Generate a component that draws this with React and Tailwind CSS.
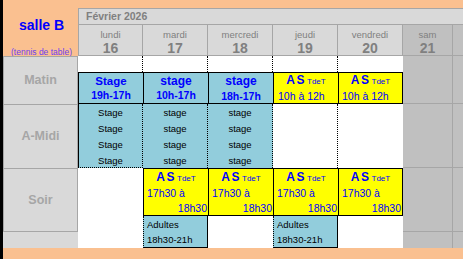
import React from "react";

const headerDays = [
  { name: "lundi", num: "16", col: "col-start-3 border-l", bg: "bg-[#d9d9d9]" },
  { name: "mardi", num: "17", col: "col-start-4", bg: "bg-[#d9d9d9]" },
  { name: "mercredi", num: "18", col: "col-start-5", bg: "bg-[#d9d9d9]" },
  { name: "jeudi", num: "19", col: "col-start-6", bg: "bg-[#d9d9d9]" },
  { name: "vendredi", num: "20", col: "col-start-7", bg: "bg-[#d9d9d9]" },
  { name: "sam", num: "21", col: "col-start-8", bg: "bg-[#c0c0c0]" },
];

const AsTitle = () => (
  <div className="flex items-baseline justify-center text-[#0000ff]">
    <span className="text-[12px] font-bold tracking-[1.5px]">AS</span>
    <span className="ml-[1px] text-[8px]">TdeT</span>
  </div>
);

const SoirAs = ({ col, last }) => (
  <div
    className={`${col} row-start-7 flex flex-col border-y border-l border-black bg-[#ffff00] pt-[1px] leading-[15px] ${
      last ? "border-r" : ""
    }`}
  >
    <AsTitle />
    <div className="pl-[3px] text-[10.5px] text-[#0000ff]">17h30 à</div>
    <div className="pr-[1px] text-right text-[10.5px] text-[#0000ff]">18h30</div>
  </div>
);

const Adultes = ({ col }) => (
  <div
    className={`${col} row-start-8 row-span-2 border-l border-r border-b border-black [border-left-style:dotted] bg-[#92cddc] pl-[3px] pt-[1px] text-[9.5px] leading-[15px] text-black`}
  >
    <div>Adultes</div>
    <div>18h30-21h</div>
  </div>
);

const StageList = ({ col, word, extra }) => (
  <div
    className={`${col} row-start-6 flex flex-col items-center bg-[#92cddc] pt-[1px] text-[9.5px] leading-4 text-black ${extra}`}
  >
    <div>{word}</div>
    <div>{word}</div>
    <div>{word}</div>
    <div>{word}</div>
  </div>
);

export default function App() {
  return (
    <div className="grid h-[259px] w-[463px] grid-cols-[3px_75px_65px_65px_65px_65px_65px_50px_10px] grid-rows-[8px_16px_32px_16px_32px_64px_48px_16px_16px_11px] overflow-hidden bg-[#fac090] font-['Liberation_Sans',Arial,sans-serif]">
      {/* left black strip */}
      <div className="col-start-1 row-start-1 row-span-10 bg-black" />

      {/* title */}
      <div className="col-start-2 row-start-1 row-span-3 flex flex-col items-center pl-[2px] pt-[17px]">
        <div className="text-[14px] font-bold leading-4 text-[#0000ff]">salle B</div>
        <div className="mt-[14px] text-[8.5px] leading-[10px] text-[#6a3ff0]">(tennis de table)</div>
      </div>

      {/* month */}
      <div className="col-start-3 col-span-7 row-start-2 border-l border-t border-[#a6a6a6] bg-[#d9d9d9] pl-[7px] text-[10.5px] font-bold leading-[15px] text-[#808080]">
        Février 2026
      </div>

      {/* day headers */}
      {headerDays.map((d) => (
        <div
          key={d.name}
          className={`${d.col} ${d.bg} row-start-3 flex flex-col items-center border-y border-r border-[#a6a6a6] pt-[4px] text-[#808080]`}
        >
          <div className="text-[9.5px] leading-[12px]">{d.name}</div>
          <div className="text-[14px] font-bold leading-[14px]">{d.num}</div>
        </div>
      ))}
      <div className="col-start-9 row-start-3 border-y border-[#a6a6a6] bg-[#c0c0c0]" />

      {/* row labels */}
      <div className="col-start-2 row-start-4 row-span-2 flex items-center justify-center border-x border-t border-[#a6a6a6] bg-[#d9d9d9] text-[12.5px] font-bold text-[#a6a6a6]">
        Matin
      </div>
      <div className="col-start-2 row-start-6 flex items-center justify-center border-x border-t border-[#a6a6a6] bg-[#d9d9d9] text-[12.5px] font-bold text-[#a6a6a6]">
        A-Midi
      </div>
      <div className="col-start-2 row-start-7 row-span-2 flex items-center justify-center border border-[#a6a6a6] bg-[#d9d9d9] text-[12.5px] font-bold text-[#a6a6a6]">
        Soir
      </div>
      <div className="col-start-2 row-start-9 bg-[#d9d9d9]" />

      {/* weekend columns */}
      <div className="col-start-8 row-start-4 row-span-2 border-b border-r border-[#a6a6a6] bg-[#c0c0c0]" />
      <div className="col-start-8 row-start-6 border-b border-r border-[#a6a6a6] bg-[#c0c0c0]" />
      <div className="col-start-8 row-start-7 row-span-2 border-b border-r border-[#a6a6a6] bg-[#c0c0c0]" />
      <div className="col-start-8 row-start-9 border-r border-[#a6a6a6] bg-[#c0c0c0]" />
      <div className="col-start-9 row-start-4 row-span-2 border-b border-[#a6a6a6] bg-[#c0c0c0]" />
      <div className="col-start-9 row-start-6 border-b border-[#a6a6a6] bg-[#c0c0c0]" />
      <div className="col-start-9 row-start-7 row-span-2 border-b border-[#a6a6a6] bg-[#c0c0c0]" />
      <div className="col-start-9 row-start-9 bg-[#c0c0c0]" />

      {/* blank row under the header */}
      <div className="col-start-3 row-start-4 border-r border-dotted border-black bg-white" />
      <div className="col-start-4 row-start-4 border-r border-dotted border-black bg-white" />
      <div className="col-start-5 row-start-4 border-r border-dotted border-black bg-white" />
      <div className="col-start-6 row-start-4 border-r border-dotted border-black bg-white" />
      <div className="col-start-7 row-start-4 bg-white" />

      {/* matin */}
      <div className="col-start-3 row-start-5 flex flex-col items-center border-y border-l border-black bg-[#92cddc] pt-[1px] leading-[14px] text-[#0000ff]">
        <div className="text-[11.5px] font-bold">Stage</div>
        <div className="text-[10.5px] font-bold">19h-17h</div>
      </div>
      <div className="col-start-4 row-start-5 flex flex-col items-center border-y border-l border-black bg-[#92cddc] pt-[1px] leading-[14px] text-[#0000ff]">
        <div className="text-[12px] font-bold">stage</div>
        <div className="text-[10.5px] font-bold">10h-17h</div>
      </div>
      <div className="col-start-5 row-start-5 flex flex-col items-center border-y border-l border-black bg-[#92cddc] pt-[1px] leading-[14px] text-[#0000ff]">
        <div className="text-[12px] font-bold">stage</div>
        <div className="relative top-[1px] text-[10.5px] font-bold">18h-17h</div>
      </div>
      <div className="col-start-6 row-start-5 flex flex-col border-y border-l border-black bg-[#ffff00] leading-[15px]">
        <AsTitle />
        <div className="pl-[4px] text-[10.5px] text-[#0000ff]">10h à 12h</div>
      </div>
      <div className="col-start-7 row-start-5 flex flex-col border border-black bg-[#ffff00] leading-[15px]">
        <AsTitle />
        <div className="pl-[3px] text-[10.5px] text-[#0000ff]">10h à 12h</div>
      </div>

      {/* a-midi */}
      <StageList
        col="col-start-3"
        word="Stage"
        extra="border-l border-r border-b border-black [border-right-style:dotted] [border-bottom-style:dotted]"
      />
      <StageList col="col-start-4" word="stage" extra="border-r border-dotted border-black" />
      <StageList col="col-start-5" word="stage" extra="border-r border-dotted border-black" />
      <div className="col-start-6 row-start-6 border-r border-dotted border-black bg-white" />
      <div className="col-start-7 row-start-6 bg-white" />

      {/* soir */}
      <div className="col-start-3 row-start-7 row-span-3 bg-white" />
      <SoirAs col="col-start-4" />
      <SoirAs col="col-start-5" />
      <SoirAs col="col-start-6" />
      <SoirAs col="col-start-7" last />
      <Adultes col="col-start-4" />
      <div className="col-start-5 row-start-8 row-span-2 bg-white" />
      <Adultes col="col-start-6" />
      <div className="col-start-7 row-start-8 row-span-2 bg-white" />
    </div>
  );
}
